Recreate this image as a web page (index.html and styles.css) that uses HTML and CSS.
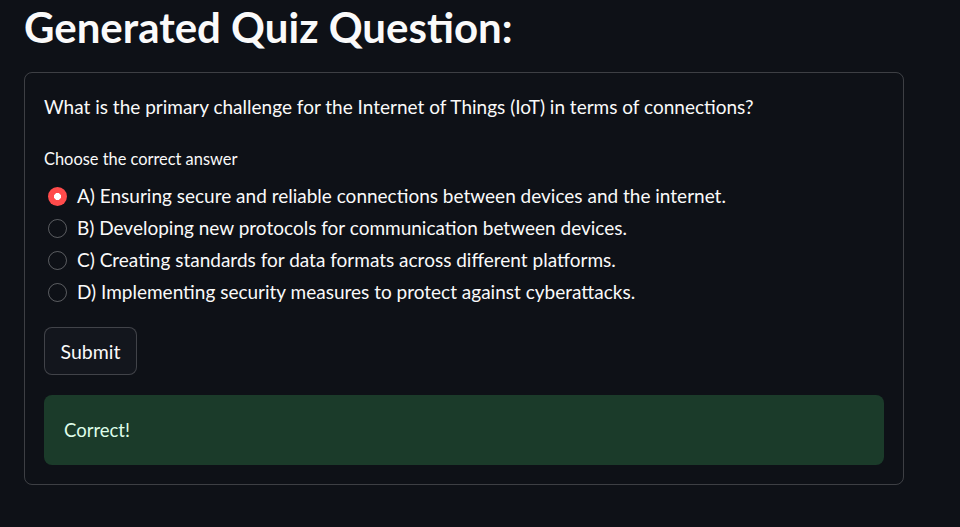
FILE: index.html
```html
<!DOCTYPE html>
<html>
<head>
<meta charset="utf-8">
<link rel="stylesheet" href="styles.css">
</head>
<body>
<main class="main">
  <h1 class="title">Generated Quiz Question:</h1>
  <form class="quiz-form">
    <p class="question">What is the primary challenge for the Internet of Things (IoT) in terms of connections?</p>
    <div class="label">Choose the correct answer</div>
    <div class="options">
      <label class="option"><span class="radio radio-on"></span><span class="opt-text">A) Ensuring secure and reliable connections between devices and the internet.</span></label>
      <label class="option"><span class="radio"></span><span class="opt-text">B) Developing new protocols for communication between devices.</span></label>
      <label class="option"><span class="radio"></span><span class="opt-text">C) Creating standards for data formats across different platforms.</span></label>
      <label class="option"><span class="radio"></span><span class="opt-text">D) Implementing security measures to protect against cyberattacks.</span></label>
    </div>
    <div class="btn-row"><button type="button" class="submit">Submit</button></div>
    <div class="success">Correct!</div>
  </form>
</main>
</body>
</html>
```

FILE: styles.css
```css
* { box-sizing: border-box; }
html, body { margin: 0; padding: 0; }
body {
  background: #0e1117;
  color: #fafafa;
  font-family: Lato, "Noto Sans", sans-serif;
  width: 960px;
  height: 527px;
  overflow: hidden;
}
.main {
  padding: 0 56px 0 24px;
}
.title {
  margin: 0;
  padding-top: 2px;
  font-size: 42px;
  line-height: 50px;
  font-weight: 700;
  color: #fafafa;
  height: 72px;
}
.quiz-form {
  border: 1px solid rgba(250, 250, 250, 0.2);
  border-radius: 8px;
  padding: 19px;
  display: flex;
  flex-direction: column;
}
.question {
  margin: 0;
  font-size: 19px;
  line-height: 30px;
}
.label {
  margin-top: 25px;
  font-size: 16.4px;
  line-height: 24px;
}
.options {
  margin-top: 9px;
  display: flex;
  flex-direction: column;
}
.option {
  display: flex;
  align-items: center;
  height: 32px;
}
.radio {
  width: 19px;
  height: 19px;
  border-radius: 50%;
  border: 1.5px solid rgba(250, 250, 250, 0.32);
  margin-left: 4px;
  margin-right: 10px;
  flex: none;
}
.radio-on {
  border: none;
  background: radial-gradient(circle, #ffffff 0 3.2px, #ff4b4b 3.8px);
}
.opt-text {
  font-size: 19px;
  line-height: 24px;
}
.btn-row {
  margin-top: 19px;
}
.submit {
  height: 48px;
  width: 93px;
  padding: 0;
  border: 1px solid rgba(250, 250, 250, 0.2);
  border-radius: 8px;
  background: #13161d;
  color: #fafafa;
  font-family: inherit;
  font-size: 19.5px;
}
.success {
  margin-top: 20px;
  height: 70px;
  border-radius: 8px;
  background: #1b3b2a;
  color: #dffde9;
  padding: 0 20px;
  display: flex;
  align-items: center;
  font-size: 18.5px;
}
```
